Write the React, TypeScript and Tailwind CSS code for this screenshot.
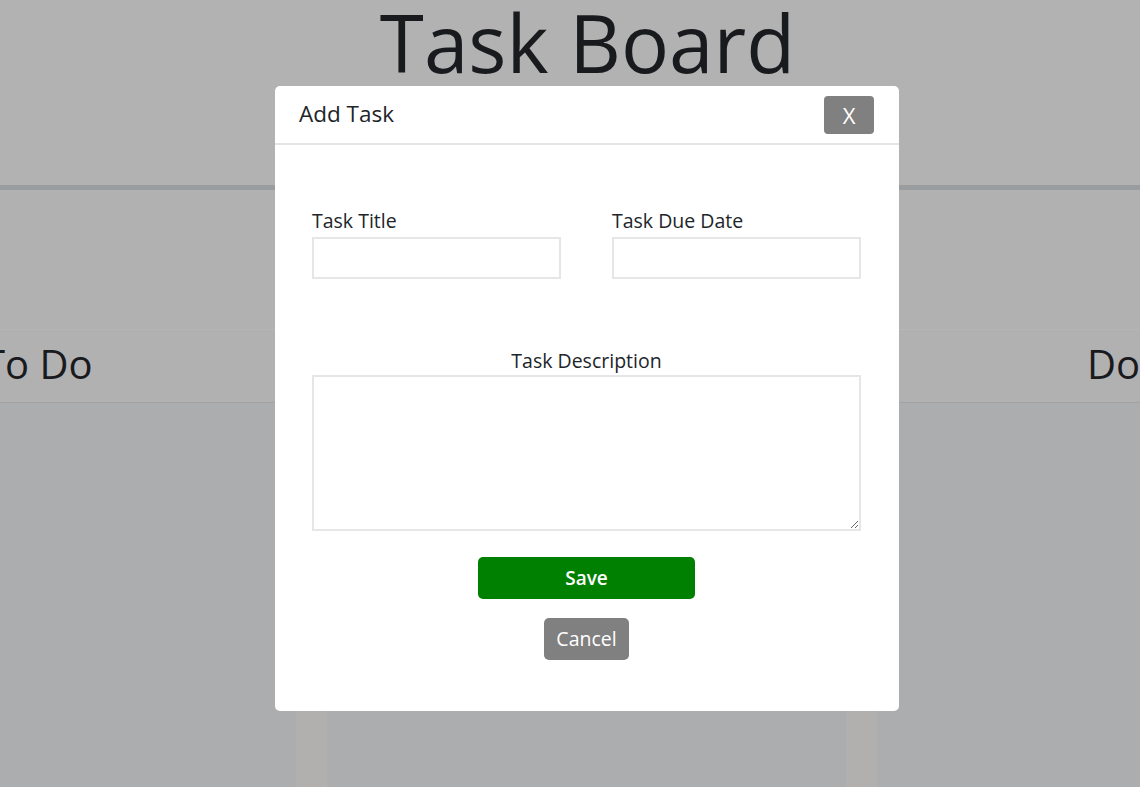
import React from "react";

const font = { fontFamily: '"Open Sans", "Noto Sans", sans-serif' };

function Board() {
  return (
    <div className="h-[787px] w-[1140px] overflow-hidden bg-[#b2b2b2] text-[#181a1d]" style={font}>
      {/* Header */}
      <header className="h-[185px] flex justify-center pl-[35px]">
        <h1 className="text-[80px] font-normal leading-none pt-[2px]">Task Board</h1>
      </header>
      <div className="h-[5px] bg-[#9a9da0]" />

      {/* Add task area */}
      <div className="h-[139px] bg-[#b1b1b1]" />

      {/* Column headers */}
      <div className="h-[74px] border-t border-b border-t-[#b6b6b6] border-b-[#a3a3a3] flex items-center justify-between bg-[#b1b1b1]">
        <h2 className="text-[40px] leading-none -ml-[17px] pb-[5px]">To Do</h2>
        <h2 className="text-[40px] leading-none -mr-[47px] pb-[5px]">Done</h2>
      </div>

      {/* Columns */}
      <div className="h-full flex bg-[#acadaf]">
        <div className="w-[296px]" />
        <div className="w-[31px] bg-[#b1b0af]" />
        <div className="w-[519px]" />
        <div className="w-[31px] bg-[#b1b0af]" />
      </div>
    </div>
  );
}

function Field({ label }: { label: string }) {
  return (
    <label className="flex flex-col">
      <span className="text-[19.5px] leading-[26px] mb-[3px]">{label}</span>
      <input type="text" className="h-[42px] w-[249px] border-2 border-[#e6e6e6] bg-white outline-none" />
    </label>
  );
}

function AddTaskModal() {
  return (
    <div className="absolute left-[275px] top-[86px] w-[624px] h-[625px] bg-white rounded-[5px] text-[#212529]" style={font}>
      <div className="h-[59px] flex items-center justify-between pl-[24px] pr-[25px] border-b-2 border-[#e5e5e5]">
        <h5 className="text-[22.5px] leading-none pb-[1px]">Add Task</h5>
        <button className="w-[50px] h-[38px] rounded-[4px] bg-[#808080] text-white text-[22px] leading-none">X</button>
      </div>

      <div className="pl-[37px] pr-[38px] pt-[63px]">
        <div className="flex justify-between">
          <Field label="Task Title" />
          <Field label="Task Due Date" />
        </div>

        <div className="flex flex-col items-center mt-[69px]">
          <span className="text-[19.5px] leading-[26px] mb-[1px]">Task Description</span>
          <textarea className="w-[549px] h-[156px] border-2 border-[#e6e6e6] outline-none resize-y" />
        </div>

        <div className="flex flex-col items-center mt-[26px]">
          <button className="w-[217px] h-[42px] rounded-[5px] bg-[#008000] text-white text-[19px] font-semibold">Save</button>
          <button className="mt-[19px] w-[85px] h-[42px] rounded-[5px] bg-[#808080] text-white text-[19.5px]">Cancel</button>
        </div>
      </div>
    </div>
  );
}

export default function App() {
  return (
    <div className="relative w-[1140px] h-[787px] overflow-hidden">
      <Board />
      <AddTaskModal />
    </div>
  );
}
